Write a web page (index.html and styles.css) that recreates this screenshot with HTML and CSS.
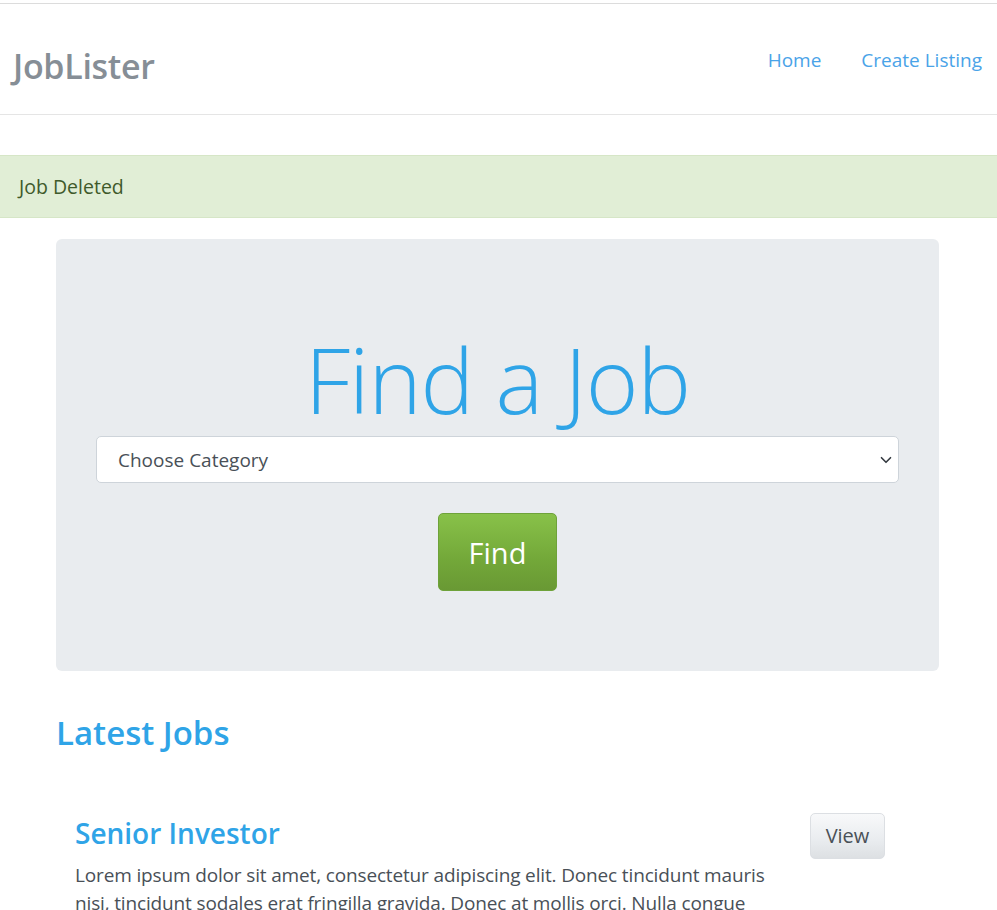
FILE: index.html
```html
<!DOCTYPE html>
<html lang="en">
<head>
<meta charset="utf-8">
<title>JobLister</title>
<link rel="stylesheet" href="styles.css">
</head>
<body>
<div class="page">
  <nav class="navbar">
    <a class="brand" href="#">JobLister</a>
    <ul class="nav">
      <li><a href="#">Home</a></li>
      <li><a href="#">Create Listing</a></li>
    </ul>
  </nav>

  <div class="alert">Job Deleted</div>

  <main class="container">
    <section class="jumbotron">
      <h1 class="display">Find a Job</h1>
      <form class="search">
        <div class="select-wrap">
          <select class="select">
            <option>Choose Category</option>
          </select>
          <svg class="chevron" viewBox="0 0 16 16" width="12" height="12"><path d="M2 5l6 6 6-6" fill="none" stroke="#343a40" stroke-width="2.2" stroke-linecap="round" stroke-linejoin="round"/></svg>
        </div>
        <button type="button" class="btn-find">Find</button>
      </form>
    </section>

    <h2 class="section-title">Latest Jobs</h2>

    <div class="job">
      <div class="job-body">
        <h3 class="job-title">Senior Investor</h3>
        <p class="job-text">Lorem ipsum dolor sit amet, consectetur adipiscing elit. Donec tincidunt mauris nisi, tincidunt sodales erat fringilla gravida. Donec at mollis orci. Nulla congue ultricies felis, vel tincidunt nisl posuere sit amet.</p>
      </div>
      <div class="job-action">
        <a class="btn-view" href="#">View</a>
      </div>
    </div>
  </main>
</div>
</body>
</html>
```

FILE: styles.css
```css
* { box-sizing: border-box; }
html, body { margin: 0; padding: 0; }
body {
  font-family: "Open Sans", "Noto Sans", "Liberation Sans", sans-serif;
  font-size: 20px;
  line-height: 1.5;
  color: #495057;
  background: #fff;
}
.page { padding-top: 3px; }

.navbar {
  display: flex;
  align-items: center;
  justify-content: space-between;
  height: 112px;
  border-top: 1px solid #dcdcdc;
  border-bottom: 1px solid #e5e5e5;
  padding: 0 15px 0 13px;
}
.brand {
  font-size: 34px;
  font-weight: 600;
  color: #868e96;
  text-decoration: none;
  letter-spacing: -0.3px;
  margin-top: 14px;
}
.nav {
  display: flex;
  list-style: none;
  margin: 2px 0 0;
  padding: 0;
  gap: 40px;
}
.nav a {
  color: #4aa3e8;
  text-decoration: none;
  font-size: 19px;
}

.alert {
  margin-top: 40px;
  height: 63px;
  background: #e1eed6;
  border-top: 1px solid #d6e6c7;
  border-bottom: 1px solid #d6e6c7;
  color: #3f5a2b;
  padding: 0 19px;
  display: flex;
  align-items: center;
  font-size: 19.5px;
}

.container {
  width: 883px;
  margin: 21px 0 0 56px;
}

.jumbotron {
  background: #e9ecef;
  border-radius: 6px;
  padding: 86px 40px 80px;
  display: flex;
  flex-direction: column;
  align-items: center;
}
.display {
  margin: 0;
  font-size: 90px;
  font-weight: 300;
  line-height: 1.2;
  color: #2fa4e7;
  letter-spacing: -1px;
}
.search {
  width: 100%;
  display: flex;
  flex-direction: column;
  align-items: center;
  margin-top: 3px;
}
.select-wrap {
  position: relative;
  width: 100%;
}
.select {
  width: 100%;
  height: 47px;
  appearance: none;
  -webkit-appearance: none;
  background: #fff;
  border: 1px solid #ced4da;
  border-radius: 5px;
  padding: 0 21px;
  font-family: inherit;
  font-size: 19px;
  color: #495057;
}
.chevron {
  position: absolute;
  right: 7px;
  top: 18px;
}
.btn-find {
  margin-top: 30px;
  width: 119px;
  height: 78px;
  border: 1px solid #6ea23a;
  border-radius: 5px;
  background: linear-gradient(#88c149, #73a839 60%, #699934);
  color: #fff;
  font-family: inherit;
  font-size: 29px;
  padding: 0;
}

.section-title {
  margin: 42px 0 0 0;
  font-size: 33px;
  font-weight: 600;
  line-height: 1.2;
  color: #2fa4e7;
}

.job {
  display: flex;
  justify-content: space-between;
  align-items: flex-start;
  padding: 60px 54px 0 19px;
}
.job-body {
  width: 720px;
}
.job-title {
  margin: 4px 0 11px;
  font-size: 28px;
  font-weight: 600;
  line-height: 1.2;
  color: #2fa4e7;
}
.job-text {
  margin: 0;
  font-size: 19px;
  letter-spacing: -0.15px;
  line-height: 28px;
}
.btn-view {
  display: inline-flex;
  align-items: center;
  justify-content: center;
  width: 75px;
  height: 46px;
  border: 1px solid #dcdfe3;
  border-radius: 5px;
  background: linear-gradient(#f8f9fa, #e9ecef 60%, #dde0e3);
  color: #495057;
  text-decoration: none;
  font-size: 20px;
}
```
